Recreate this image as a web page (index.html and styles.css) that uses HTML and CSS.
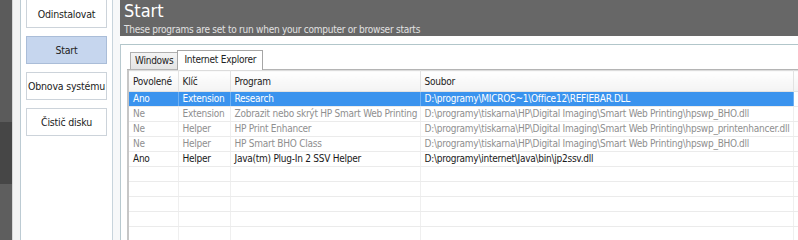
FILE: index.html
```html
<!DOCTYPE html>
<html lang="cs">
<head>
  <meta charset="UTF-8">
  <title>Start</title>
  <link rel="stylesheet" href="styles.css">
</head>
<body>
  <div class="window">
    <div class="strip"></div>
    <div class="gutter"></div>
    <nav class="sidebar">
      <div class="nav-btn first">Odinstalovat</div>
      <div class="nav-btn active">Start</div>
      <div class="nav-btn">Obnova systému</div>
      <div class="nav-btn">Čistič disku</div>
    </nav>
    <div class="spacer"></div>
    <main class="main">
      <header class="head">
        <h1>Start</h1>
        <p>These programs are set to run when your computer or browser starts</p>
      </header>
      <div class="group">
        <div class="tabs">
          <div class="tab">Windows</div>
          <div class="tab selected">Internet Explorer</div>
        </div>
        <table class="list">
          <colgroup>
            <col style="width:50px">
            <col style="width:52px">
            <col style="width:190px">
            <col style="width:373px">
            <col>
          </colgroup>
          <thead>
            <tr><th>Povolené</th><th>Klíč</th><th>Program</th><th>Soubor</th><th></th></tr>
          </thead>
          <tbody>
            <tr class="sel"><td>Ano</td><td>Extension</td><td>Research</td><td>D:\programy\MICROS~1\Office12\REFIEBAR.DLL</td><td class="x"></td></tr>
            <tr class="off"><td>Ne</td><td>Extension</td><td>Zobrazit nebo skrýt HP Smart Web Printing</td><td>D:\programy\tiskarna\HP\Digital Imaging\Smart Web Printing\hpswp_BHO.dll</td><td></td></tr>
            <tr class="off"><td>Ne</td><td>Helper</td><td>HP Print Enhancer</td><td>D:\programy\tiskarna\HP\Digital Imaging\Smart Web Printing\hpswp_printenhancer.dll</td><td></td></tr>
            <tr class="off"><td>Ne</td><td>Helper</td><td>HP Smart BHO Class</td><td>D:\programy\tiskarna\HP\Digital Imaging\Smart Web Printing\hpswp_BHO.dll</td><td></td></tr>
            <tr><td>Ano</td><td>Helper</td><td>Java(tm) Plug-In 2 SSV Helper</td><td>D:\programy\internet\Java\bin\jp2ssv.dll</td><td></td></tr>
            <tr><td></td><td></td><td></td><td></td><td></td></tr>
            <tr><td></td><td></td><td></td><td></td><td></td></tr>
            <tr><td></td><td></td><td></td><td></td><td></td></tr>
            <tr><td></td><td></td><td></td><td></td><td></td></tr>
            <tr><td></td><td></td><td></td><td></td><td></td></tr>
          </tbody>
        </table>
      </div>
    </main>
  </div>
</body>
</html>
```

FILE: styles.css
```css
/* celé okno */
body {
  margin: 0;
  font-family: 'DejaVu Sans Condensed', 'Liberation Sans', sans-serif;
  font-size: 10px;
  letter-spacing: -0.25px;
  color: #1a1a1a;
  background: #fff;
}
.window {
  display: flex;
  width: 798px;
  height: 240px;
  overflow: hidden;
}
/* tmavý pruh vlevo */
.strip {
  width: 12px;
  flex: none;
  background: linear-gradient(to bottom, #5b5b5b 0 122px, #464646 122px 184px, #5e5e5e 184px);
}
.gutter {
  width: 8px;
  flex: none;
  background: #f2f2f2;
  border-left: 1px solid #d6d6d6;
  box-sizing: border-box;
}
/* levé menu */
.sidebar {
  width: 93px;
  flex: none;
  box-sizing: border-box;
  border-left: 1px solid #bccbd3;
  border-right: 1px solid #c8d4dc;
  background: #fff;
  display: flex;
  flex-direction: column;
  gap: 8px;
  padding-left: 5px;
}
.nav-btn {
  width: 81px;
  height: 28px;
  box-sizing: border-box;
  border: 1px solid #ccd3da;
  display: flex;
  align-items: center;
  justify-content: center;
  color: #222;
  font-size: 10.5px;
  letter-spacing: -0.2px;
  white-space: nowrap;
}
.nav-btn.first {
  margin-top: -1px;
  height: 29px;
}
.nav-btn.active {
  background: #c6d6ee;
  border-color: #aabdd8;
}
.spacer {
  width: 7px;
  flex: none;
  background: #f7f8f9;
}
/* hlavní část */
.main {
  flex: 1;
  display: flex;
  flex-direction: column;
}
.head {
  height: 36px;
  flex: none;
  background: #676767;
  color: #fff;
  padding: 0 4px;
}
.head h1 {
  margin: 0;
  font-size: 18px;
  font-weight: normal;
  letter-spacing: 0;
  line-height: 22px;
}
.head p {
  margin: 1px 0 0;
  font-size: 10px;
  color: #e2e2e2;
  line-height: 13px;
}
.group {
  flex: 1;
  margin-top: 8px;
  border-top: 1px solid #b2c6ca;
  border-left: 1px solid #b8c9cf;
  padding-left: 6px;
  display: flex;
  flex-direction: column;
}
/* záložky */
.tabs {
  display: flex;
  align-items: flex-end;
  height: 24px;
  padding-left: 3px;
  border-bottom: 1px solid #b4b4b4;
}
.tab {
  height: 16px;
  line-height: 16px;
  padding: 0 4px;
  border: 1px solid #b0b0b0;
  border-bottom: none;
  background: linear-gradient(#f4f4f4, #e4e4e4);
  color: #222;
}
.tab.selected {
  height: 19px;
  line-height: 18px;
  padding: 0 6px;
  background: #fff;
  border-color: #a6a6a6;
  margin-bottom: -1px;
  margin-left: -1px;
}
/* seznam */
.list {
  border-collapse: collapse;
  table-layout: fixed;
  width: calc(100% + 40px);
  border-left: 2px solid #c6c6c6;
}
.list th {
  height: 20px;
  padding: 0 4px;
  text-align: left;
  font-weight: normal;
  color: #222;
  background: linear-gradient(#fff, #f3f3f3);
  border-top: 1px solid #dcdcdc;
  border-bottom: 1px solid #e2e2e2;
  border-right: 1px solid #e2e2e2;
}
.list td {
  height: 14px;
  padding: 0 4px;
  line-height: 14px;
  white-space: nowrap;
  overflow: hidden;
  border-bottom: 1px solid #ebebeb;
  border-right: 1px solid #efefef;
}
.list tr.off td {
  color: #8f8f8f;
}
.list tr.sel td {
  background: #3a93ee;
  color: #fff;
  border-right-color: #6fb0f2;
}
.list tr.sel td.x {
  background: #fff;
}
```
